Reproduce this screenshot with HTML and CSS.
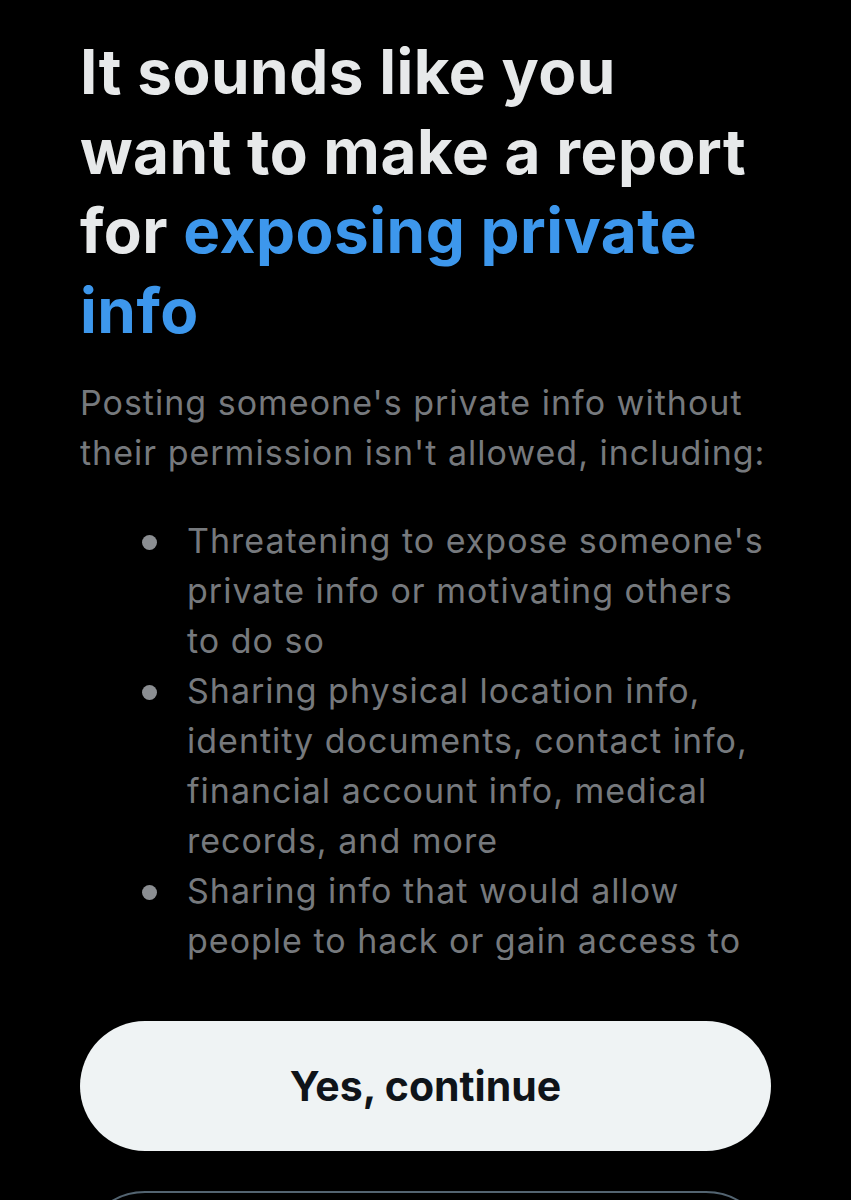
FILE: index.html
```html
<!DOCTYPE html>
<html lang="en">

<head>
    <meta charset="UTF-8">
    <meta name="viewport" content="width=device-width, initial-scale=1.0">
    <title>Report</title>
    <link rel="stylesheet" href="styles.css">
</head>

<body>
    <main class="sheet">
        <div class="scroll">
            <h1 class="title">It sounds like you want to make a report for <span class="accent">exposing private info</span></h1>
            <p class="lead">Posting someone's private info without their permission isn't allowed, including:</p>
            <ul class="rules">
                <li>Threatening to expose someone's private info or motivating others to do so</li>
                <li>Sharing physical location info, identity documents, contact info, financial account info, medical records, and more</li>
                <li>Sharing info that would allow people to hack or gain access to someone's accounts</li>
            </ul>
        </div>
        <div class="actions">
            <button class="btn btn-primary">Yes, continue</button>
            <button class="btn btn-outline">No, go back</button>
        </div>
    </main>
</body>

</html>
```

FILE: styles.css
```css
html,
body {
    margin: 0;
    background-color: #000;
}

body {
    font-family: Inter, "Noto Sans", sans-serif;
    height: 1200px;
    overflow: hidden;
}

.sheet {
    padding: 0 80px;
}

.scroll {
    height: 960px;
    overflow: hidden;
    padding-top: 32px;
    box-sizing: border-box;
}

.title {
    max-width: 680px;
    margin: 0;
    color: #e7e9ea;
    font-size: 62px;
    font-weight: 700;
    line-height: 79.5px;
    letter-spacing: 0.5px;
}

.accent {
    color: #3d97ec;
}

.lead {
    margin: 28px 0 0;
    color: #76797d;
    font-size: 34px;
    line-height: 50px;
    letter-spacing: 1px;
}

.rules {
    list-style: none;
    margin: 38px 0 0;
    padding: 0;
    color: #76797d;
    font-size: 34px;
    line-height: 50px;
    letter-spacing: 1px;
}

.rules li {
    display: flex;
    align-items: flex-start;
}

.rules li::before {
    content: "";
    flex-shrink: 0;
    width: 15px;
    height: 15px;
    margin: 19px 30px 0 62px;
    border-radius: 50%;
    background-color: #8b8e92;
}

.actions {
    margin-top: 61px;
    display: flex;
    flex-direction: column;
    gap: 40px;
}

.btn {
    width: 100%;
    height: 130px;
    border-radius: 65px;
    font-family: Inter, "Noto Sans", sans-serif;
    font-size: 41px;
    font-weight: 700;
    cursor: pointer;
}

.btn-primary {
    background-color: #eff3f4;
    color: #0f1419;
    border: none;
}

.btn-outline {
    background-color: transparent;
    color: #eff3f4;
    border: 2px solid #536471;
}
```
